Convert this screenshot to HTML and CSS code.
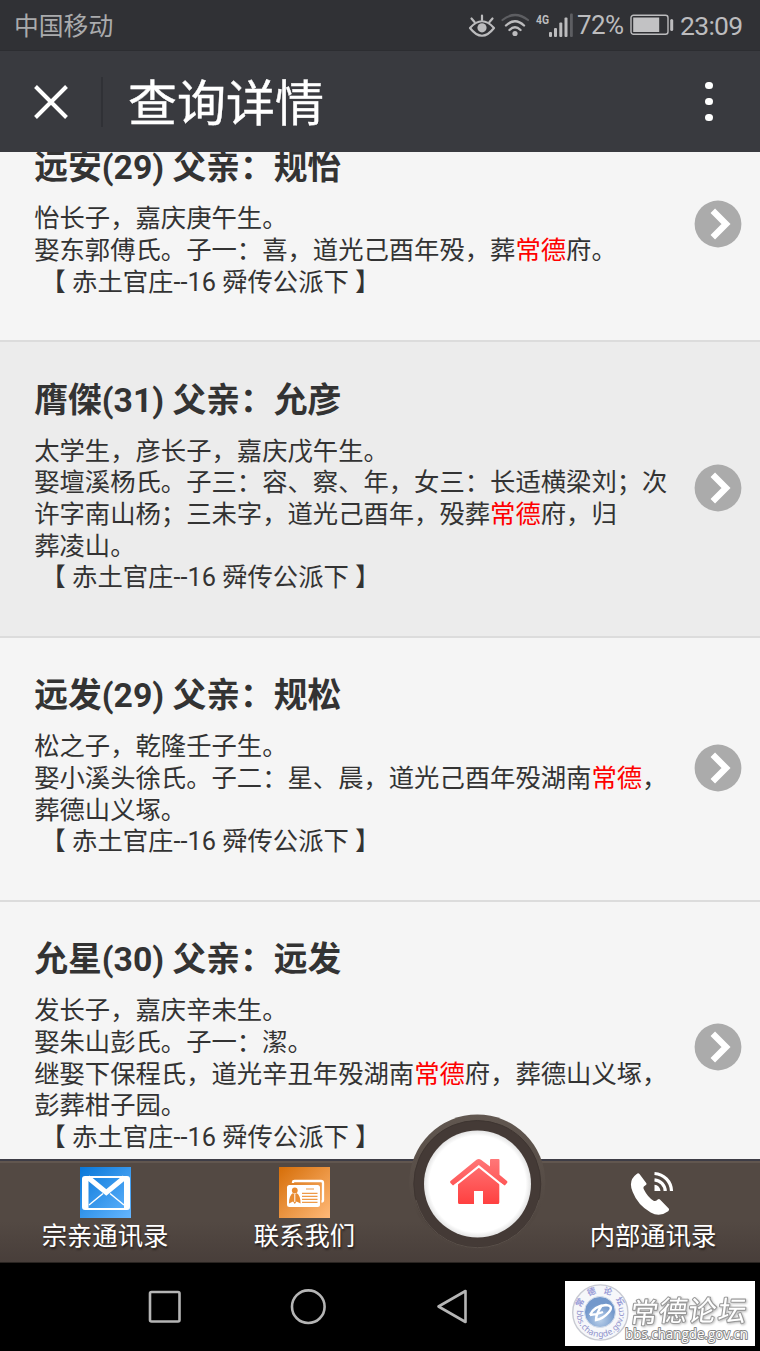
FILE: index.html
```html
<!DOCTYPE html>
<html lang="zh-CN">
<head>
<meta charset="utf-8">
<title>查询详情</title>
<link rel="stylesheet" href="styles.css">
</head>
<body>
<div class="screen">
  <div class="status">
    <span class="carrier">中国移动</span>
    <svg class="status-icons" width="106" height="30" viewBox="468 10 106 30">
      <g fill="none" stroke="#bcbcbe" stroke-width="2.2" stroke-linecap="round">
        <path d="M470 28Q482 14.500 494 28Q482 43.500 470 28Z" stroke-linejoin="round"/>
        <path d="M482 20V15.500M474.500 22L471.500 18.500M489.500 22L492.500 18.500"/>
        <path d="M506 25.500Q515 17 524 25.500M509.500 30Q515 24.500 520.500 30" stroke-width="2.400"/>
        <path d="M502.500 20Q515 10 528 20" stroke="#5d5e62"/>
      </g>
      <circle cx="482" cy="27.800" r="4.600" fill="#bcbcbe"/>
      <circle cx="515" cy="33.500" r="2.600" fill="#bcbcbe"/>
      <text x="536" y="24" class="net" textLength="13" lengthAdjust="spacingAndGlyphs">4G</text>
      <g fill="#bcbcbe"><rect x="549" y="32" width="3" height="5" rx="1"/><rect x="554" y="28" width="3" height="9" rx="1"/><rect x="559.300" y="22.500" width="3" height="14.500" rx="1"/><rect x="564.500" y="17.500" width="3" height="19.500" rx="1"/><rect x="570" y="13.500" width="2.800" height="23.500" rx="1" fill="#5d5e62"/></g>
    </svg>
    <span class="percent">72%</span>
    <svg class="battery" width="44" height="22" viewBox="0 0 44 22">
      <rect x="1" y="1.200" width="37" height="19" rx="2.500" fill="none" stroke="#bcbcbe" stroke-width="1.400"/>
      <rect x="3.200" y="3.500" width="26" height="14.500" fill="#c2c2c4"/>
      <rect x="40.200" y="5" width="3" height="12" rx="1.500" fill="#bcbcbe"/>
    </svg>
    <span class="clock">23:09</span>
  </div>

  <div class="header">
    <svg class="close" width="34" height="34" viewBox="0 0 34 34"><path d="M1.500 1.500L32.500 32.500M32.500 1.500L1.500 32.500" stroke="#fff" stroke-width="4"/></svg>
    <span class="divider"></span>
    <h1 class="title">查询详情</h1>
    <span class="more"><i class="dot"></i><i class="dot"></i><i class="dot"></i></span>
  </div>

  <div class="list">
    <div class="item first">
      <div class="info">
        <h2 class="name">远安(29) 父亲：规怡</h2>
        <p class="detail">怡长子，嘉庆庚午生。<br>娶东郭傅氏。子一：喜，道光己酉年殁，葬<em class="hit">常德</em>府。<br>&nbsp;【 赤土官庄--16 舜传公派下 】</p>
      </div>
      <svg class="arrow" width="48" height="48" viewBox="0 0 48 48"><circle cx="24" cy="24" r="23.400" fill="#ababab"/><path d="M18.800 10.800L32 24L18.800 37.200" fill="none" stroke="#fff" stroke-width="6.400"/></svg>
    </div>
    <div class="item shaded">
      <div class="info">
        <h2 class="name">膺傑(31) 父亲：允彦</h2>
        <p class="detail">太学生，彦长子，嘉庆戊午生。<br>娶壇溪杨氏。子三：容、察、年，女三：长适横梁刘；次<br>许字南山杨；三未字，道光己酉年，殁葬<em class="hit">常德</em>府，归<br>葬凌山。<br>&nbsp;【 赤土官庄--16 舜传公派下 】</p>
      </div>
      <svg class="arrow" width="48" height="48" viewBox="0 0 48 48"><circle cx="24" cy="24" r="23.400" fill="#ababab"/><path d="M18.800 10.800L32 24L18.800 37.200" fill="none" stroke="#fff" stroke-width="6.400"/></svg>
    </div>
    <div class="item">
      <div class="info">
        <h2 class="name">远发(29) 父亲：规松</h2>
        <p class="detail">松之子，乾隆壬子生。<br>娶小溪头徐氏。子二：星、晨，道光己酉年殁湖南<em class="hit">常德</em>，<br>葬德山义塚。<br>&nbsp;【 赤土官庄--16 舜传公派下 】</p>
      </div>
      <svg class="arrow" width="48" height="48" viewBox="0 0 48 48"><circle cx="24" cy="24" r="23.400" fill="#ababab"/><path d="M18.800 10.800L32 24L18.800 37.200" fill="none" stroke="#fff" stroke-width="6.400"/></svg>
    </div>
    <div class="item">
      <div class="info">
        <h2 class="name">允星(30) 父亲：远发</h2>
        <p class="detail">发长子，嘉庆辛未生。<br>娶朱山彭氏。子一：潔。<br>继娶下保程氏，道光辛丑年殁湖南<em class="hit">常德</em>府，葬德山义塚，<br>彭葬柑子园。<br>&nbsp;【 赤土官庄--16 舜传公派下 】</p>
      </div>
      <svg class="arrow" width="48" height="48" viewBox="0 0 48 48"><circle cx="24" cy="24" r="23.400" fill="#ababab"/><path d="M18.800 10.800L32 24L18.800 37.200" fill="none" stroke="#fff" stroke-width="6.400"/></svg>
    </div>
  </div>

  <div class="tabs">
    <div class="tab tab-family">
      <svg class="tab-icon" width="51" height="51" viewBox="0 0 51 51">
        <defs><linearGradient id="blue" x1="0" y1="0" x2="1" y2="1"><stop offset="0" stop-color="#0877d8"/><stop offset="1" stop-color="#65b6ff"/></linearGradient></defs>
        <rect width="51" height="51" fill="url(#blue)"/>
        <path fill="#fff" fill-rule="evenodd" d="M5 9H47Q50 9 50 12V40Q50 43 47 43H5Q2 43 2 40V12Q2 9 5 9ZM8.500 11V41H44V11Z"/>
        <path d="M8 10.500L26.300 25.500L44.500 10.500" fill="none" stroke="#fff" stroke-width="5"/>
        <path d="M9 38L23 26.500M44 38L30 26.500" stroke="#fff" stroke-width="1.500"/>
      </svg>
      <span class="label">宗亲通讯录</span>
    </div>
    <div class="tab tab-contact">
      <svg class="tab-icon" width="51" height="51" viewBox="0 0 51 51">
        <defs><linearGradient id="orange" x1="0" y1="0" x2="1" y2="1"><stop offset="0" stop-color="#d66e08"/><stop offset="1" stop-color="#ffb978"/></linearGradient></defs>
        <rect width="51" height="51" fill="url(#orange)"/>
        <path d="M14 16V15Q14 14 15.500 14H42Q44 14 44 16V33Q44 34.500 42.500 34.500" fill="none" stroke="#fff" stroke-width="2.300"/>
        <rect x="8" y="18" width="33" height="22" rx="2.500" fill="#fff"/>
        <circle cx="15.800" cy="23.500" r="2.900" fill="#e88b30"/>
        <path d="M10 36.500Q10 28.500 14 26L15.800 28L17.600 26Q21.600 28.500 21.600 36.500L17.500 34.500L15.800 37L14 34.500Z" fill="#e88b30"/>
        <path d="M15.800 28V35" stroke="#fff"/>
        <path d="M27 22H35M23 26.300H38.500M23 29.300H38.500M23 32.300H38.500M23 35.300H38.500" stroke="#ee9a48" stroke-width="1.200"/>
      </svg>
      <span class="label">联系我们</span>
    </div>
    <div class="tab tab-inner">
      <svg class="tab-icon" width="51" height="51" viewBox="2 0 51 51">
        <path fill="#fff" d="M10 7Q11.500 5.300 12.800 7L19.500 16Q20.500 17.700 18.500 18.500Q15.500 20 17.500 23Q21 30 26.500 33.500Q28.500 35 31 32.500Q32.500 31.500 33.500 32.800L42 41.500Q43 42.800 41.500 44.200Q33 50.500 24 45.500Q11 38 6 25Q1 13.500 10 7Z" transform="translate(.7 0)"/>
        <path d="M28.500 6.500A18 18 0 0 1 45.500 24M28.500 12.800A11.500 11.500 0 0 1 39.200 24" fill="none" stroke="#fff" stroke-width="3.200"/>
        <path d="M28.500 17.800Q33.500 18 34.500 24H28.500Z" fill="#fff"/>
      </svg>
      <span class="label">内部通讯录</span>
    </div>
    <svg class="home" width="140" height="140" viewBox="407 1114 140 140">
      <defs>
        <linearGradient id="ring" x1="0" y1="0" x2="0" y2="1"><stop offset="0" stop-color="#615750"/><stop offset=".75" stop-color="#514741"/><stop offset="1" stop-color="#514741" stop-opacity="0"/></linearGradient>
        <radialGradient id="white"><stop offset=".9" stop-color="#fff"/><stop offset="1" stop-color="#e4e4e4"/></radialGradient>
        <linearGradient id="red" x1="0" y1="0" x2="0" y2="1"><stop offset="0" stop-color="#ff7778"/><stop offset="1" stop-color="#ff4040"/></linearGradient>
      </defs>
      <ellipse cx="477.300" cy="1182.500" rx="68" ry="68" fill="url(#ring)"/>
      <circle cx="477.300" cy="1184" r="63.500" fill="#443a36" stroke="#3e3531"/>
      <path d="M416 1200A63.500 63.500 0 0 0 539 1200" fill="none" stroke="#5a504a"/>
      <circle cx="477.500" cy="1184" r="53.500" fill="url(#white)"/>
      <path fill="url(#red)" d="M450.500 1181L476.500 1159.700Q478.800 1158.300 481 1159.700L490 1166.500V1160Q490 1159 491 1159H498.500Q499.500 1159 499.500 1160V1174.800L507 1181Q508 1182 507 1183L504.800 1185.500L499.300 1182V1202.500Q499.300 1204 497.800 1204H483V1191H474V1204H459.500Q458 1204 458 1202.500V1182L453 1185.500L450.500 1183Q449.500 1182 450.500 1181Z"/>
      <path d="M455 1185.500L478.800 1166.300L502.500 1185.500" fill="none" stroke="#fff" stroke-width="2.200"/>
    </svg>
  </div>

  <div class="nav">
    <svg class="nav-icons" width="330" height="40" viewBox="145 1287 330 40" fill="none" stroke="#b5b5b5" stroke-width="2.600">
      <rect x="150" y="1292" width="29.500" height="29.500" rx="1.500"/>
      <circle cx="308.300" cy="1306.700" r="16.300"/>
      <path d="M465.500 1291V1322L438.500 1306.500Z" stroke-linejoin="round"/>
    </svg>
    <svg class="watermark" width="190" height="65" viewBox="565 1281 190 65">
      <defs>
        <radialGradient id="globe" cx=".5" cy=".75"><stop offset="0" stop-color="#b9d0ea"/><stop offset="1" stop-color="#7398cb"/></radialGradient>
        <path id="arcBottom" d="M577.200 1309A23.500 23.500 0 1 0 622.500 1306"/>
      </defs>
      <rect x="565" y="1281" width="190" height="65" fill="#fff"/>
      <circle cx="600.300" cy="1312.500" r="27.600" fill="#f6f7fa" stroke="#c8cad2" stroke-width="1.400"/>
      <circle cx="600" cy="1312" r="15.500" fill="url(#globe)" stroke="#d5deec"/>
      <path d="M590 1315Q594 1306 606 1305Q614 1306 609 1312Q603 1319 596 1320Q596 1314 602 1305M590 1315Q596 1315 603 1312" fill="none" stroke="#fff" stroke-width="2.400"/>
      <g class="seal-cn" text-anchor="middle">
        <text transform="translate(582.500 1304) rotate(-62)">常</text>
        <text transform="translate(592.500 1294.500) rotate(-20)">德</text>
        <text transform="translate(607 1294) rotate(18)">论</text>
        <text transform="translate(617.500 1303) rotate(58)">坛</text>
      </g>
      <text class="seal-url"><textPath href="#arcBottom" startOffset="1" textLength="84">bbs.changde.gov.cn</textPath></text>
      <g class="brand-cn">
        <text transform="translate(629 1323) skewX(-8)">常</text>
        <text transform="translate(658 1321) skewX(-8)">德</text>
        <text transform="translate(687 1321) skewX(-8)">论</text>
        <text transform="translate(717 1321) skewX(-8)">坛</text>
      </g>
      <text class="brand-url" x="625" y="1338.500" textLength="123" lengthAdjust="spacingAndGlyphs">bbs.changde.gov.cn</text>
    </svg>
  </div>
</div>
</body>
</html>
```
FILE: styles.css
```css
* { box-sizing: border-box; }
body { margin: 0; font-family: Roboto, "Noto Sans CJK SC", sans-serif; color: #333; }
.screen { width: 760px; height: 1351px; display: flex; flex-direction: column; overflow: hidden; background: #f5f5f5; }
.status { height: 51px; flex: none; display: flex; align-items: center; background: #303135; color: #bcbcbe; padding: 0 17px 0 14px; border-bottom: 1px solid #2c2d31; }
.carrier { font-size: 24.8px; margin-right: auto; color: #aaabad; line-height: 50px; padding-top: 4px; }
.status-icons { flex: none; }
.net { font: bold 12.5px Roboto, sans-serif; fill: #bcbcbe; }
.percent { font-size: 26px; width: 46px; margin-left: 3px; white-space: nowrap; letter-spacing: -.6px; }
.battery { margin-left: 7px; }
.clock { font-size: 26.5px; width: 63px; margin-left: 6px; padding-top: 1px; white-space: nowrap; letter-spacing: -.7px; }
.header { height: 101px; flex: none; display: flex; align-items: center; background: #393a3f; padding: 0 45px 0 34px; }
.divider { width: 2px; height: 50px; background: #303136; margin: 0 25px 0 33px; }
.title { margin: 0; padding-top: 6px; color: #fff; font-size: 49px; line-height: 70px; font-weight: 400; -webkit-text-stroke: .4px #fff; }
.more { margin-left: auto; display: flex; flex-direction: column; gap: 8.6px; width: 12px; align-items: center; }
.dot { width: 7.6px; height: 7.6px; border-radius: 50%; background: #fff; }
.list { flex: 1; min-height: 0; overflow: hidden; }
.item { display: flex; align-items: center; justify-content: space-between; padding: 37.6px 18px 41.7px 34.2px; border-bottom: 2px solid #dcdcdc; background: #f5f5f5; }
.first { margin-top: -42.3px; }
.shaded { background: #ececec; }
.info { white-space: nowrap; }
.name { margin: 0 0 14px; font-size: 33.78px; line-height: 42px; font-weight: 700; }
.detail { margin: 0; font-size: 25.33px; line-height: 31.67px; }
.hit { color: #f00; font-style: normal; }
.arrow { flex: none; margin-bottom: -2px; }
.tabs { position: relative; flex: none; height: 104px; display: flex; background: linear-gradient(#534943, #534943 60%, #483e3a); border-top: 2px solid #3e3d46; border-bottom: 1px solid #292421; box-shadow: inset 0 2px #61564f; }
.tab { display: flex; flex-direction: column; align-items: center; padding-top: 6px; }
.tab-family { width: 210px; }
.tab-contact { width: 189px; }
.tab-inner { width: 206px; margin-left: 151px; }
.tab-icon { flex: none; }
.label { color: #fff; font-size: 25.33px; line-height: 38px; text-shadow: 1px 2px 2px #28211e; white-space: nowrap; }
.home { position: absolute; left: 407px; top: -47px; }
.nav { height: 88px; flex: none; background: #000; display: flex; align-items: center; justify-content: space-between; padding: 0 5px 0 145px; }
.watermark { margin-top: 13px; }
.seal-cn { font: bold 8.5px "Noto Sans CJK SC", sans-serif; fill: #989bd6; }
.seal-url { font: 8.5px "Noto Sans", sans-serif; fill: #8f92cc; }
.brand-cn { font: 28px "Noto Sans CJK SC", sans-serif; fill: #fff; stroke: #999; stroke-width: 2.2px; stroke-linejoin: round; paint-order: stroke; filter: drop-shadow(1px 1px 1px #bbb); }
.brand-url { font: 14px "Open Sans", sans-serif; fill: #fff; stroke: #858585; stroke-width: 2px; stroke-linejoin: round; paint-order: stroke; }
```
